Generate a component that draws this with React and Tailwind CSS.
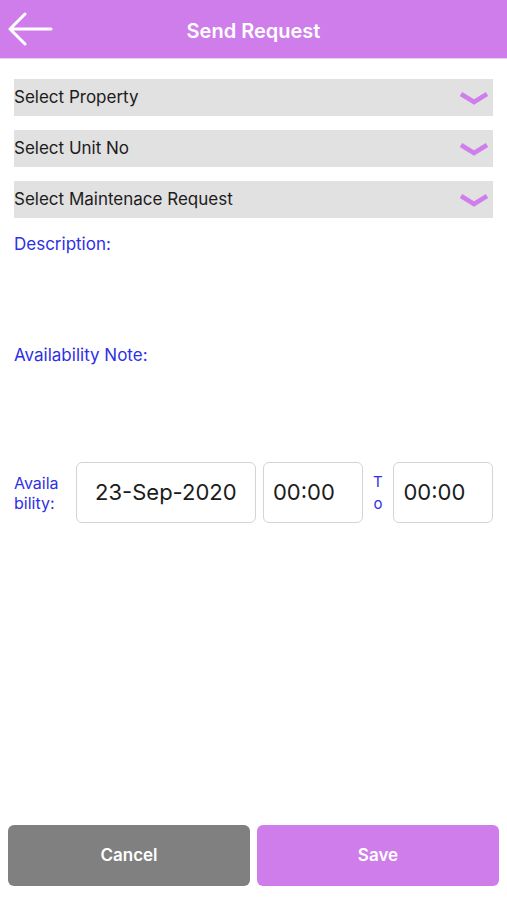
import React from 'react';

function Chevron() {
  return (
    <svg width="32" height="16" viewBox="0 0 32 16" className="shrink-0">
      <polyline points="3,4 16,12 29,4" fill="none" stroke="#cf7eec" strokeWidth="4.5" strokeLinejoin="miter" />
    </svg>
  );
}

function SelectRow({ label }) {
  return (
    <div className="h-[37px] bg-[#e1e1e1] flex items-center justify-between pr-[3px]">
      <span className="text-[17px] text-[#1c1c1c]">{label}</span>
      <Chevron />
    </div>
  );
}

export default function App() {
  return (
    <div className="w-[507px] h-[900px] bg-white flex flex-col" style={{ fontFamily: 'Inter, "Liberation Sans", sans-serif' }}>
      {/* top bar */}
      <div className="h-[59px] bg-[#ce7deb] border-b border-[#e9d2f2] flex items-center relative shrink-0 pt-[3px]">
        <svg width="46" height="36" viewBox="0 0 46 36" className="absolute left-[7px] top-[12px]">
          <path d="M44 17 H3 M18 2 L3 17 L18 32" fill="none" stroke="white" strokeWidth="3" strokeLinecap="round" strokeLinejoin="round" />
        </svg>
        <h1 className="w-full text-center text-white font-semibold text-[20px]">Send Request</h1>
      </div>

      <div className="px-[14px] pt-[20px] flex flex-col gap-[14px]">
        <SelectRow label="Select Property" />
        <SelectRow label="Select Unit No" />
        <SelectRow label="Select Maintenace Request" />
      </div>

      <div className="px-[14px] pt-[14px] text-[17px] text-[#2f2fe6] h-[125px]">Description:</div>
      <div className="px-[14px] text-[17px] text-[#2f2fe6] h-[119px]">Availability Note:</div>

      {/* availability row */}
      <div className="flex items-center px-[14px] gap-[7px]">
        <div className="w-[55px] text-[16px] leading-[20px] text-[#2f2fe6]">
          <div>Availa</div>
          <div>bility:</div>
        </div>
        <div className="w-[181px] h-[61px] border border-[#d4d4d4] rounded-[6px] flex items-center justify-center text-[22px] text-[#1c1c1c]">
          23-Sep-2020
        </div>
        <div className="w-[100px] h-[61px] border border-[#d4d4d4] rounded-[6px] flex items-center pl-[9px] text-[22px] text-[#1c1c1c]">
          00:00
        </div>
        <div className="w-[17px] text-[15px] leading-[22px] text-[#2f2fe6] text-center">
          <div>T</div>
          <div>o</div>
        </div>
        <div className="w-[100px] h-[61px] border border-[#d4d4d4] rounded-[6px] flex items-center pl-[9px] text-[22px] text-[#1c1c1c]">
          00:00
        </div>
      </div>

      <div className="flex-1" />

      {/* action buttons */}
      <div className="flex gap-[7px] px-[8px] pb-[14px]">
        <button className="flex-1 h-[61px] rounded-[6px] bg-[#808080] text-white font-semibold text-[17px]">Cancel</button>
        <button className="flex-1 h-[61px] rounded-[6px] bg-[#ce7deb] text-white font-semibold text-[17px]">Save</button>
      </div>
    </div>
  );
}
